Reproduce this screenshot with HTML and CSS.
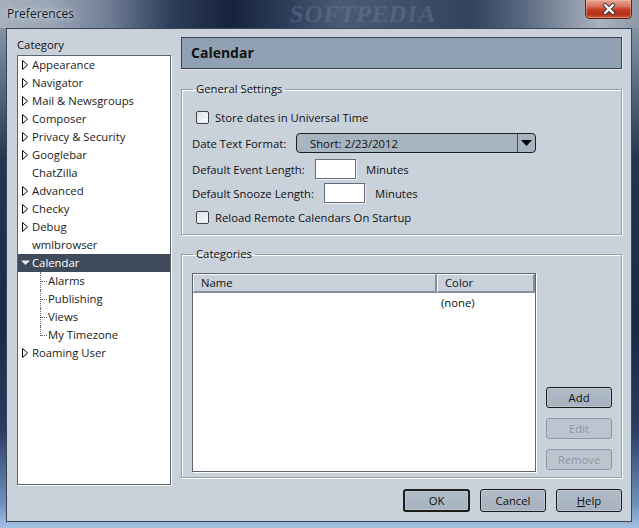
FILE: index.html
```html
<!DOCTYPE html>
<html>
<head>
<meta charset="utf-8">
<link rel="stylesheet" href="styles.css">
</head>
<body>
<div class="window">
  <div class="titlebar">
    <span class="title">Preferences</span>
    <span class="watermark">SOFTPEDIA</span>
    <div class="close">
      <svg width="20" height="12" viewBox="0 0 20 12"><path d="M6 2 L14 10 M14 2 L6 10" stroke="#3a3a3a" stroke-width="4.2" stroke-linecap="round"/><path d="M6 2 L14 10 M14 2 L6 10" stroke="#fff" stroke-width="2.4" stroke-linecap="round"/></svg>
    </div>
  </div>
  <div class="client">
    <div class="main">
      <div class="left">
        <div class="cat-label">Category</div>
        <div class="tree">
          <div class="row"><span class="tw"><svg width="7" height="10" viewBox="0 0 7 10"><polygon points="0.5,0.5 5.5,5 0.5,9.5" fill="#fff" stroke="#000"/></svg></span>Appearance</div>
          <div class="row"><span class="tw"><svg width="7" height="10" viewBox="0 0 7 10"><polygon points="0.5,0.5 5.5,5 0.5,9.5" fill="#fff" stroke="#000"/></svg></span>Navigator</div>
          <div class="row"><span class="tw"><svg width="7" height="10" viewBox="0 0 7 10"><polygon points="0.5,0.5 5.5,5 0.5,9.5" fill="#fff" stroke="#000"/></svg></span>Mail &amp; Newsgroups</div>
          <div class="row"><span class="tw"><svg width="7" height="10" viewBox="0 0 7 10"><polygon points="0.5,0.5 5.5,5 0.5,9.5" fill="#fff" stroke="#000"/></svg></span>Composer</div>
          <div class="row"><span class="tw"><svg width="7" height="10" viewBox="0 0 7 10"><polygon points="0.5,0.5 5.5,5 0.5,9.5" fill="#fff" stroke="#000"/></svg></span>Privacy &amp; Security</div>
          <div class="row"><span class="tw"><svg width="7" height="10" viewBox="0 0 7 10"><polygon points="0.5,0.5 5.5,5 0.5,9.5" fill="#fff" stroke="#000"/></svg></span>Googlebar</div>
          <div class="row"><span class="tw"></span>ChatZilla</div>
          <div class="row"><span class="tw"><svg width="7" height="10" viewBox="0 0 7 10"><polygon points="0.5,0.5 5.5,5 0.5,9.5" fill="#fff" stroke="#000"/></svg></span>Advanced</div>
          <div class="row"><span class="tw"><svg width="7" height="10" viewBox="0 0 7 10"><polygon points="0.5,0.5 5.5,5 0.5,9.5" fill="#fff" stroke="#000"/></svg></span>Checky</div>
          <div class="row"><span class="tw"><svg width="7" height="10" viewBox="0 0 7 10"><polygon points="0.5,0.5 5.5,5 0.5,9.5" fill="#fff" stroke="#000"/></svg></span>Debug</div>
          <div class="row"><span class="tw"></span>wmlbrowser</div>
          <div class="row selected"><span class="tw"><svg width="9" height="6" viewBox="0 0 9 6"><polygon points="0,0.5 9,0.5 4.5,5" fill="#e6ebf1"/></svg></span>Calendar</div>
          <div class="children">
            <div class="row child first">Alarms</div>
            <div class="row child">Publishing</div>
            <div class="row child">Views</div>
            <div class="row child last">My Timezone</div>
          </div>
          <div class="row"><span class="tw"><svg width="7" height="10" viewBox="0 0 7 10"><polygon points="0.5,0.5 5.5,5 0.5,9.5" fill="#fff" stroke="#000"/></svg></span>Roaming User</div>
        </div>
      </div>
      <div class="right">
        <div class="header">Calendar</div>
        <fieldset class="group general">
          <legend>General Settings</legend>
          <div class="frow r1"><span class="check"></span><span>Store dates in Universal Time</span></div>
          <div class="frow r2"><span class="lbl w-date">Date Text Format:</span>
            <div class="dropdown"><span class="dd-text">Short: 2/23/2012</span><span class="dd-btn"><svg width="11" height="6" viewBox="0 0 11 6"><polygon points="0,0 11,0 5.5,6" fill="#000"/></svg></span></div>
          </div>
          <div class="frow r3"><span class="lbl w-event">Default Event Length:</span><span class="input"></span><span class="unit">Minutes</span></div>
          <div class="frow r4"><span class="lbl w-snooze">Default Snooze Length:</span><span class="input"></span><span class="unit">Minutes</span></div>
          <div class="frow r5"><span class="check"></span><span>Reload Remote Calendars On Startup</span></div>
        </fieldset>
        <fieldset class="group cats">
          <legend>Categories</legend>
          <div class="cats-body">
            <div class="table">
              <div class="thead"><div class="th name">Name</div><div class="th color">Color</div></div>
              <div class="trow"><div class="td name"></div><div class="td color">(none)</div></div>
            </div>
            <div class="side-btns">
              <button class="btn">Add</button>
              <button class="btn disabled">Edit</button>
              <button class="btn disabled">Remove</button>
            </div>
          </div>
        </fieldset>
      </div>
    </div>
    <div class="footer">
      <button class="btn big default">OK</button>
      <button class="btn big">Cancel</button>
      <button class="btn big"><u>H</u>elp</button>
    </div>
  </div>
</div>
</body>
</html>
```

FILE: styles.css
```css
* { box-sizing: border-box; }
html, body { margin: 0; padding: 0; }
body {
  width: 639px;
  height: 528px;
  overflow: hidden;
  font-family: "Open Sans", "Noto Sans", sans-serif;
  font-size: 11.3px;
  color: #111;
}
.window {
  width: 639px;
  height: 528px;
  display: flex;
  flex-direction: column;
  background: linear-gradient(180deg, #9aa6b6 0, #6d7c93 60px, #26344f 160px, #1b2946 330px, #2a3d62 430px, #6f93bf 505px, #a3c1e2 528px);
}
.titlebar {
  height: 28px;
  flex: none;
  display: flex;
  align-items: flex-start;
  position: relative;
  background: linear-gradient(90deg, #a6b0bd 0, #9aa5b4 50px, #6e7d94 110px, #2f3e5a 170px, #17233c 230px, #2a3a56 280px, #4a5b76 340px, #3d4d68 420px, #33425c 470px, #56667e 520px, #8b97a7 570px, #aab3be 600px, #8d98a8 639px);
  overflow: hidden;
}
.title {
  margin: 5px 0 0 7px;
  font-size: 12px;
  color: #151a22;
  text-shadow: 0 0 5px rgba(230,236,244,0.9), 0 0 9px rgba(230,236,244,0.7);
}
.watermark {
  position: absolute;
  left: 290px;
  top: 1px;
  font-family: "Liberation Serif", serif;
  font-weight: bold;
  font-size: 24px;
  line-height: 26px;
  letter-spacing: 1px;
  color: rgba(110,130,160,0.4);
  transform: skewX(-8deg);
}
.close {
  position: absolute;
  left: 585px;
  top: 0;
  width: 47px;
  height: 19px;
  border: 1px solid #5b2014;
  border-top: none;
  border-radius: 0 0 5px 5px;
  background: linear-gradient(180deg, #e6a495 0, #d8745f 35%, #c2391f 55%, #b8321b 80%, #cc5a3c 100%);
  box-shadow: inset 0 0 0 1px rgba(255,200,180,0.45);
  display: flex;
  align-items: center;
  justify-content: center;
}
.client {
  flex: none;
  height: 494px;
  margin: 0 7px 0 6px;
  background: #c9d1da;
  border: 1px solid #3b4456;
  padding: 8px 9px 0 10px;
  display: flex;
  flex-direction: column;
}
.main {
  height: 448px;
  display: flex;
  gap: 10px;
}
.left {
  width: 154px;
  display: flex;
  flex-direction: column;
}
.cat-label {
  height: 18px;
  line-height: 16px;
  padding-top: 0;
}
.tree {
  height: 430px;
  background: #fff;
  border: 1px solid #60646e;
  box-shadow: 1px 1px 0 #fff;
}
.row {
  height: 18px;
  display: flex;
  align-items: center;
  padding-left: 4px;
  padding-bottom: 1px;
  white-space: nowrap;
  color: #1a1a1a;
}
.tw {
  width: 10px;
  display: flex;
  align-items: center;
  padding-top: 1px;
}
.row.selected {
  background: #3f4a5b;
  color: #fff;
  padding-left: 3px;
}
.row.selected .tw { width: 11px; }
.children {
  position: relative;
}
.row.child {
  padding-left: 30px;
  position: relative;
}
.row.child::before {
  content: "";
  position: absolute;
  left: 23px;
  top: 9px;
  width: 6px;
  border-top: 1px dotted #6a6a6a;
}
.row.child::after {
  content: "";
  position: absolute;
  left: 22px;
  top: 0;
  height: 18px;
  border-left: 1px dotted #6a6a6a;
}
.row.child.last::after { height: 10px; }
.right {
  width: 441px;
  display: flex;
  flex-direction: column;
}
.header {
  height: 32px;
  background: #8fa1b3;
  border: 1px solid #394353;
  box-shadow: 1px 1px 0 #e4e9ee;
  font-weight: bold;
  font-size: 14px;
  display: flex;
  align-items: center;
  padding-left: 9px;
  padding-bottom: 1px;
  color: #121212;
}
.group {
  margin: 0;
  border: 1px solid #949ea9;
  box-shadow: inset 1px 1px 0 #fff, 1px 1px 0 #fff;
  padding: 10px 9px 8px 10px;
  min-width: 0;
}
.group legend {
  margin-left: 1px;
  padding: 0 3px;
  line-height: 16px;
  height: 17px;
}
.general { margin-top: 12px; }
.cats { margin-top: 11px; padding-bottom: 5px; }
.frow {
  display: flex;
  align-items: center;
  white-space: nowrap;
}
.r1 { height: 18px; padding-left: 4px; }
.r2 { height: 20px; margin-top: 7px; }
.r3 { height: 20px; margin-top: 6px; }
.r4 { height: 20px; margin-top: 4px; }
.r5 { height: 18px; margin-top: 5px; padding-left: 4px; }
.check {
  width: 13px;
  height: 13px;
  border: 1px solid #3d4149;
  border-radius: 2px;
  background: linear-gradient(135deg, #dfe4ea, #f7f8fa);
  margin-right: 6px;
  flex: none;
}
.lbl { flex: none; }
.w-date { width: 104px; }
.w-event { width: 123px; }
.w-snooze { width: 132px; }
.dropdown {
  width: 240px;
  height: 20px;
  border: 1px solid #1e1e1e;
  border-radius: 4px;
  background: #a8b4c0;
  display: flex;
  align-items: center;
}
.dd-text {
  flex: 1;
  padding-left: 13px;
}
.dd-btn {
  width: 18px;
  height: 100%;
  border-left: 1px solid #4a4f58;
  display: flex;
  align-items: center;
  justify-content: center;
}
.input {
  width: 41px;
  height: 20px;
  background: #fff;
  border: 1px solid #686d77;
  box-shadow: 1px 1px 0 #eef1f4;
  flex: none;
}
.unit { margin-left: 10px; }
.cats-body {
  display: flex;
  gap: 10px;
}
.table {
  width: 345px;
  height: 199px;
  background: #fff;
  border: 1px solid #60646e;
  box-shadow: 1px 1px 0 #fff;
}
.thead {
  height: 19px;
  display: flex;
  background: #c9d1da;
}
.th {
  border-top: 1px solid #f4f6f8;
  border-left: 1px solid #f4f6f8;
  border-right: 2px solid #878f9a;
  border-bottom: 2px solid #878f9a;
  padding-left: 7px;
  line-height: 15px;
}
.th.name { width: 244px; }
.th.color { flex: 1; }
.trow {
  display: flex;
  height: 18px;
  align-items: center;
}
.td.name { width: 248px; }
.side-btns {
  width: 66px;
  display: flex;
  flex-direction: column;
  justify-content: flex-end;
  gap: 10px;
  padding-bottom: 2px;
}
.btn {
  font-family: inherit;
  font-size: 11.3px;
  color: #111;
  height: 21px;
  padding: 0 0 1px;
  border: 1px solid #1c1c1c;
  border-radius: 3px;
  background: linear-gradient(180deg, #b0bbc7, #a6b2bf);
  box-shadow: inset 0 0 0 1px rgba(210,218,226,0.45);
}
.btn.disabled {
  border-color: #8e98a3;
  color: #8d96a1;
  background: #bcc5cf;
  box-shadow: none;
}
.footer {
  display: flex;
  justify-content: flex-end;
  gap: 10px;
  margin-top: 4px;
}
.btn.big {
  width: 66px;
  height: 23px;
}
.btn.default {
  width: 67px;
  border-width: 2px;
}
```
